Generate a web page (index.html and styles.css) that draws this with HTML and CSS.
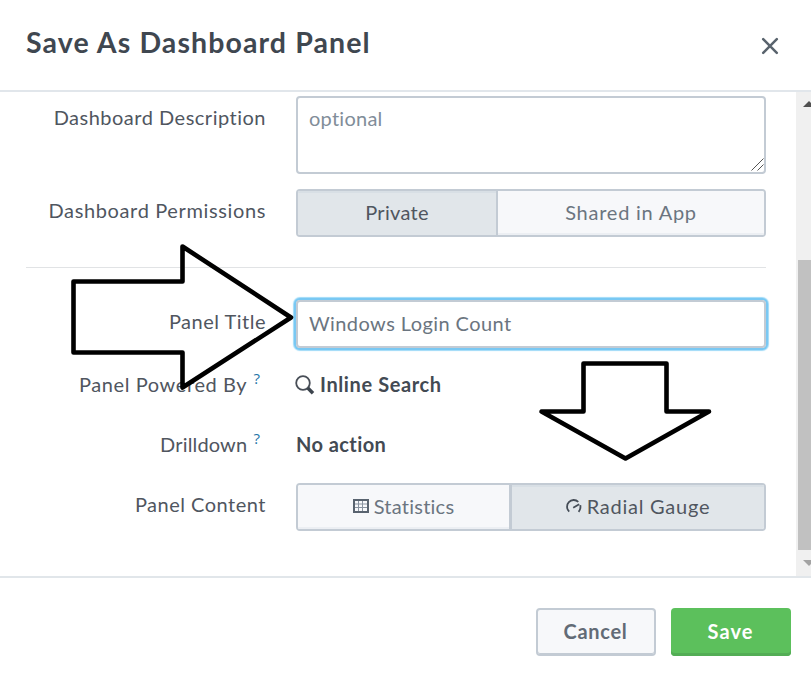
FILE: index.html
```
<!DOCTYPE html>
<html lang="en">
<head>
<meta charset="utf-8">
<title>Save As Dashboard Panel</title>
<link rel="stylesheet" href="styles.css">
</head>
<body>
<div class="modal">
  <header class="modal-header">
    <h1>Save As Dashboard Panel</h1>
    <button class="close" aria-label="Close"><svg width="18" height="18" viewBox="0 0 18 18"><path d="M2.2 2.2L15.8 15.8M15.8 2.2L2.2 15.8"/></svg></button>
  </header>
  <main class="modal-body">
    <form class="form">
      <div class="row description">
        <label class="s50">Dashboard Description</label>
        <div class="textarea"><span class="s25">optional</span>
          <svg class="grip" width="13" height="13" viewBox="0 0 13 13"><path d="M.5 12.5L12.5 .5M6.5 12.5L12.5 6.5"/></svg>
        </div>
      </div>
      <div class="row permissions">
        <label class="s63">Dashboard Permissions</label>
        <div class="segments">
          <span class="segment active private s30">Private</span>
          <span class="segment s75">Shared in App</span>
        </div>
      </div>
      <hr>
      <div class="row title-row">
        <label class="s50">Panel Title</label>
        <div class="input s42">Windows Login Count</div>
      </div>
      <div class="row static">
        <label class="s60">Panel Powered By <sup>?</sup></label>
        <div class="value s60"><svg class="search" width="20" height="20" viewBox="0 0 20 20"><circle cx="8" cy="8" r="6.8"/><path d="M12.8 13L18 18.2"/></svg>Inline Search</div>
      </div>
      <div class="row static">
        <label class="s15">Drilldown <sup>?</sup></label>
        <div class="value s42">No action</div>
      </div>
      <div class="row content">
        <label class="s50">Panel Content</label>
        <div class="segments">
          <span class="segment statistics s25"><svg class="table" width="16" height="14" viewBox="0 0 16 14"><path class="grid" d="M1 5H15M1 8.500H15M5.500 1V13M9.500 1V13"/><path class="frame" d="M1 1H15V13H1Z"/></svg>Statistics</span>
          <span class="segment active s75"><svg class="gauge" width="16" height="14" viewBox="0 0 16 14"><path d="M3.200 12.600A6.300 6.300 0 0 1 12.300 2.800M14.300 6.200Q15 10 12.600 12.800M7.200 8.800L13.200 5.200"/></svg>Radial Gauge</span>
        </div>
      </div>
    </form>
    <div class="scrollbar">
      <svg class="up" width="13" height="6" viewBox="0 0 13 6"><path d="M0 6L6 0L12 6Z"/></svg>
      <div class="thumb"></div>
      <svg class="down" width="13" height="6" viewBox="0 0 13 6"><path d="M0 0L6 6L12 0Z"/></svg>
    </div>
  </main>
  <footer class="modal-footer">
    <button class="button">Cancel</button>
    <button class="button primary">Save</button>
  </footer>
  <svg class="arrows" width="811" height="681" viewBox="0 0 811 681">
    <path d="M73.500 281.500H182.500V246.500L291 317.500L182.500 387.500V352.500H73.500Z"/>
    <path d="M583.500 363.500H666.500V411.500H709L625.500 458.500L541.500 411.500H583.500Z"/>
  </svg>
</div>
</body>
</html>
```
FILE: styles.css
```
* { box-sizing: border-box; }
body { margin: 0; background: #fff; color: #50565f; font: 20px/28px Lato, "Liberation Sans", sans-serif; }
.modal { position: relative; width: 811px; height: 681px; display: flex; flex-direction: column; overflow: hidden; }
.modal-header { height: 92px; flex: none; display: flex; justify-content: space-between; align-items: flex-start; padding: 24px 32px 0 26px; border-bottom: 2px solid #e1e6eb; }
h1 { margin: 0; font-size: 28.5px; line-height: 36px; font-weight: 700; letter-spacing: 1.1px; color: #3f4750; }
.close { margin-top: 13px; padding: 0; border: 0; background: none; line-height: 0; }
.close path { fill: none; stroke: #59636d; stroke-width: 2.5; stroke-linecap: round; }
.modal-body { height: 484px; flex: none; display: flex; }
.form { flex: 1; padding: 4px 30px 0 26px; }
.row { display: grid; grid-template-columns: 240px 470px; column-gap: 30px; align-items: start; }
label { text-align: right; white-space: nowrap; padding-top: 7px; }
.description { height: 93px; }
.permissions { height: 78px; }
hr { margin: 0; border: 0; height: 1px; background: #e1e3e5; }
.title-row { padding-top: 32px; height: 102px; }
.static { height: 60px; }
.static label { padding-top: 0; }
.content { height: 48px; margin-top: -7px; }
.textarea { position: relative; height: 78px; border: 2px solid #c3cbd4; border-radius: 4px; padding: 6px 11px; color: #818d99; }
.grip { position: absolute; right: 0; bottom: 1px; }
.grip path { stroke: #555; stroke-width: 1; fill: none; }
.segments { display: flex; height: 48px; border: 2px solid #c3cbd4; border-radius: 4px; overflow: hidden; }
.segment { flex: 1; display: flex; align-items: center; justify-content: center; color: #6b7580; background: #f7f8fa; box-shadow: inset 0 -2px #eceff3; padding-bottom: 3px; }
.segment.active { background: #e1e6ea; box-shadow: inset 0 2px #d8dfe5; color: #50565f; }
.private { flex: 0 0 200px; border-right: 2px solid #c3cbd4; }
.statistics { flex: 0 0 214px; border-right: 3px solid #c3cbd4; }
.input { height: 48px; border: 2px solid #c3cbd4; border-radius: 4px; padding: 7px 11px; color: #6b7580; box-shadow: 0 0 0 2px #79c8f3, 0 0 1px 3px #9edaf8; }
.value { display: flex; align-items: center; font-weight: 700; color: #434a53; }
sup { font-family: "Open Sans", sans-serif; font-size: 15px; line-height: 0; vertical-align: 8px; color: #1e73a8; margin: 0 6px 0 1px; letter-spacing: 0; }
.search { margin: 2px 5px 0 -1px; }
.search circle { fill: none; stroke: #484e57; stroke-width: 1.8; }
.search path { stroke: #3c444d; stroke-width: 3.5; }
.table { margin: 1px 5px 0 0; }
.table path { fill: none; stroke: #59636f; }
.table .grid { stroke-width: 1; stroke: #8993a0; }
.table .frame { stroke-width: 2; }
.gauge { margin-right: 5px; }
.gauge path { fill: none; stroke: #454d57; stroke-width: 1.8; }
.scrollbar { width: 15px; background: #f0f0f0; display: flex; flex-direction: column; align-items: flex-end; overflow: hidden; }
.scrollbar svg { flex: none; margin-right: -5px; }
.up { margin-top: 9px; fill: #505050; }
.thumb { width: 13px; height: 290px; margin-top: 153px; background: #c1c1c1; }
.down { margin-top: 10px; fill: #a3a3a3; }
.modal-footer { flex: 1; border-top: 2px solid #e1e6ea; display: flex; justify-content: flex-end; gap: 15px; padding: 30px 20px 0; }
.button { width: 120px; height: 48px; border: 2px solid #c3cbd4; border-radius: 4px; background: #f7f8fa; box-shadow: inset 0 -1px #c3cbd4; color: #626b76; font: 700 20px/28px Lato, sans-serif; letter-spacing: .7px; padding: 0 1px 2px 0; }
.primary { border: 0; background: #5cc05c; box-shadow: inset 0 -3px #53ad55; color: #fff; letter-spacing: 1.1px; }
.arrows { position: absolute; left: 0; top: 0; pointer-events: none; }
.arrows path { fill: none; stroke: #000; stroke-width: 4.6; stroke-linejoin: round; }
.s15 { letter-spacing: .15px; }
.s25 { letter-spacing: .25px; }
.s30 { letter-spacing: .3px; }
.s42 { letter-spacing: .42px; }
.s50 { letter-spacing: .5px; }
.s60 { letter-spacing: .6px; }
.s63 { letter-spacing: .63px; }
.s75 { letter-spacing: .75px; }
```
